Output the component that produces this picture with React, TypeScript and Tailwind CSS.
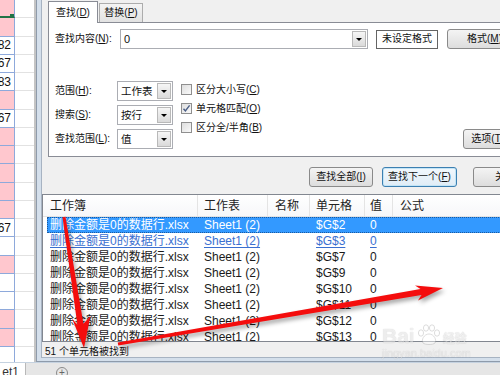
import type { ReactNode } from 'react';

const FONT = "font-['Liberation_Sans','Noto_Sans_CJK_SC',sans-serif]";

type SheetCell = { pink: boolean; value?: string };

const SHEET_ROWS: SheetCell[] = [
  { pink: true },
  { pink: true },
  { pink: false, value: '82' },
  { pink: false, value: '67' },
  { pink: false, value: '83' },
  { pink: true },
  { pink: false, value: '67' },
  { pink: true },
  { pink: true },
  { pink: true },
  { pink: true },
  { pink: true },
  { pink: false, value: '67' },
  { pink: false },
  { pink: true },
  { pink: false },
  { pink: false },
  { pink: true },
  { pink: true },
  { pink: false },
];

const RESULTS = ['$G$2', '$G$3', '$G$7', '$G$9', '$G$10', '$G$11', '$G$12', '$G$13'];

function Key({ k }: { k: string }) {
  return (
    <>
      (<u className="underline-offset-[1px]">{k}</u>)
    </>
  );
}

function Sheet() {
  return (
    <div className="flex h-[362px] w-[34px] shrink-0 flex-col overflow-hidden bg-white">
      {SHEET_ROWS.map((row, i) => (
        <div key={i} className="flex h-[18.25px] shrink-0">
          <div
            className={`relative flex w-[15px] shrink-0 items-center justify-end overflow-hidden whitespace-nowrap border-r border-b pr-[3px] text-[12px] text-[#111] ${
              row.pink ? 'bg-[#ffc7ce]' : 'bg-white'
            } ${i === 0 ? 'border-b-[2px] border-b-[#217346] border-r-[#8ea9db]' : 'border-[#8ea9db]'}`}
          >
            {row.value}
            {i === 0 && <span className="absolute right-[-1px] bottom-[-3px] h-[5px] w-[5px] bg-[#217346]" />}
          </div>
          <div className="flex-1 border-b border-[#e2e2e2]" />
        </div>
      ))}
    </div>
  );
}

function DropArrow() {
  return (
    <span className="m-px flex w-[14px] items-center justify-center border border-[#b9b9b9] bg-linear-to-b from-[#f6f6f6] to-[#dadada]">
      <span className="h-0 w-0 border-x-[3px] border-t-[3px] border-x-transparent border-t-black" />
    </span>
  );
}

function Select({ value }: { value: string }) {
  return (
    <div className="flex h-[20px] w-[56px] shrink-0 border border-[#abadb3] bg-white">
      <span className="flex flex-1 items-center pl-[3px] text-[10.5px]">{value}</span>
      <DropArrow />
    </div>
  );
}

function Check({ checked, children }: { checked?: boolean; children: ReactNode }) {
  return (
    <div className="flex h-[19px] items-center whitespace-nowrap">
      <span className="flex h-[11px] w-[11px] items-center justify-center border border-[#8f8f8f] bg-linear-to-br from-[#dedede] to-[#fafafa]">
        {checked && (
          <svg width="9" height="9" viewBox="0 0 9 9">
            <path d="M1.5 4.8 L3.4 7 L7.6 1.4" fill="none" stroke="#4a5e86" strokeWidth="1.4" />
          </svg>
        )}
      </span>
      <span className="ml-[4px]">{children}</span>
    </div>
  );
}

function Btn({ className, primary, children }: { className: string; primary?: boolean; children: ReactNode }) {
  return (
    <div
      className={`flex h-[20px] shrink-0 items-center justify-center whitespace-nowrap rounded-[3px] border ${
        primary
          ? 'border-[#3c7fb1] bg-linear-to-b from-[#f2f8fd] to-[#dfecf6] shadow-[inset_0_0_0_1px_#c2e4f6]'
          : 'border-[#8a8a8a] bg-linear-to-b from-[#f4f4f4] to-[#dddddd]'
      } ${className}`}
    >
      {children}
    </div>
  );
}

function FindDialog() {
  return (
    <div className="flex h-[362px] min-w-0 flex-1 border-l-2 border-[#c4c4c4]">
      <div className="flex min-w-0 flex-1 border-b border-l border-[#8e9bab] bg-[#d4dfeb] pb-[3px] pl-[4px]">
        <div className="flex min-w-0 flex-1 flex-col overflow-hidden border-b border-l border-[#a7b3c2] bg-[#f0f0f0] text-[10px] leading-none text-[#111]">
          {/* tabs */}
          <div className="flex h-[22px] shrink-0 items-end pl-[6px]">
            <div className="relative z-10 -mb-px flex h-[22px] w-[50px] items-center justify-center border border-b-0 border-[#898c95] bg-white">
              查找<Key k="D" />
            </div>
            <div className="ml-px flex h-[19px] w-[44px] items-center justify-center border border-b-0 border-[#acacac] bg-linear-to-b from-[#f4f4f4] to-[#e2e2e2]">
              替换<Key k="P" />
            </div>
          </div>

          <div className="ml-[6px] h-[135px] w-[486px] shrink-0 border border-[#898c95] bg-white px-[6px] pt-[6px]">
            <div className="flex h-[20px] items-center">
              <span className="w-[65px] shrink-0 whitespace-nowrap">
                查找内容<Key k="N" />:
              </span>
              <div className="flex h-[20px] w-[248px] shrink-0 border border-[#abadb3] bg-white">
                <span className="flex flex-1 items-center pl-[3px] text-[11px]">0</span>
                <DropArrow />
              </div>
              <div className="ml-[8px] flex h-[19px] w-[62px] shrink-0 items-center justify-center border border-[#646464] bg-white">
                未设定格式
              </div>
              <Btn className="ml-[9px] w-[75px]">
                格式<Key k="M" />
              </Btn>
            </div>

            <div className="mt-[32px] flex">
              <div className="flex flex-col gap-[4px]">
                {[
                  ['范围', 'H', '工作表'],
                  ['搜索', 'S', '按行'],
                  ['查找范围', 'L', '值'],
                ].map(([label, k, value]) => (
                  <div key={k} className="flex h-[20px] items-center">
                    <span className="w-[62px] shrink-0 whitespace-nowrap">
                      {label}
                      <Key k={k} />:
                    </span>
                    <Select value={value} />
                  </div>
                ))}
              </div>
              <div className="-mt-px ml-[8px] flex w-[90px] flex-col">
                <Check>
                  区分大小写<Key k="C" />
                </Check>
                <Check checked>
                  单元格匹配<Key k="O" />
                </Check>
                <Check>
                  区分全/半角<Key k="B" />
                </Check>
              </div>
              <Btn className="ml-auto w-[64px] self-end">
                选项<Key k="T" /> &lt;&lt;
              </Btn>
            </div>
          </div>

          <div className="mt-[10px] flex h-[20px] shrink-0 pl-[267px]">
            <Btn className="w-[64px]">
              查找全部<Key k="I" />
            </Btn>
            <Btn primary className="ml-[9px] w-[75px]">
              查找下一个<Key k="F" />
            </Btn>
            <Btn className="ml-[16px] w-[64px]">关闭</Btn>
          </div>

          <div className="mt-[7px] flex h-[148px] w-[520px] shrink-0 flex-col overflow-hidden border border-[#828790] bg-white text-[12px] leading-none">
            <div className="flex h-[22px] shrink-0 border-b border-[#e3e3e3] bg-linear-to-b from-white to-[#f6f7f9] text-[#222]">
              <div className="flex w-[155px] items-center border-r border-[#e4e4e4] pl-[7px]">工作簿</div>
              <div className="flex w-[70px] items-center border-r border-[#e4e4e4] pl-[6px]">工作表</div>
              <div className="flex w-[42px] items-center border-r border-[#e4e4e4] pl-[7px]">名称</div>
              <div className="flex w-[55px] items-center border-r border-[#e4e4e4] pl-[6px]">单元格</div>
              <div className="flex w-[28px] items-center border-r border-[#e4e4e4] pl-[5px]">值</div>
              <div className="flex flex-1 items-center pl-[7px]">公式</div>
            </div>
            {RESULTS.map((cell, i) => {
              const selected = i === 0;
              const hot = i === 1;
              return (
                <div
                  key={cell}
                  className={`ml-[4px] flex h-[16px] shrink-0 whitespace-nowrap ${
                    selected ? 'bg-[#3399ff] text-white outline-1 outline-dotted outline-[#1a5aa0] -outline-offset-1' : ''
                  } ${hot ? 'text-[#3a6fd0] underline underline-offset-2' : ''} ${!selected && !hot ? 'text-[#1a1a1a]' : ''}`}
                >
                  <div className="flex w-[151px] items-center pl-[3px]">删除金额是0的数据行.xlsx</div>
                  <div className="flex w-[70px] items-center pl-[6px]">Sheet1 (2)</div>
                  <div className="w-[42px]" />
                  <div className="flex w-[55px] items-center pl-[6px]">{cell}</div>
                  <div className="flex w-[28px] items-center pl-[5px]">0</div>
                  <div className="flex-1" />
                </div>
              );
            })}
          </div>

          <div className="flex h-[15px] shrink-0 items-center pl-[3px] pt-[4px] whitespace-nowrap">51 个单元格被找到</div>
        </div>
      </div>
    </div>
  );
}

function SheetTabs() {
  return (
    <div className="flex h-[13px] items-start overflow-hidden border-t border-[#c5d2e0] bg-[#e6e6e6] text-[#333]">
      <div className="flex h-[13px] w-[26px] items-start justify-end border-r border-[#b8b8b8] bg-white pr-[6px] pt-[3px] text-[12px] leading-none">
        et1
      </div>
      <span className="mt-[4px] ml-[30px] flex h-[12px] w-[12px] items-start justify-center rounded-full border border-[#8a8a8a] text-[10px] leading-none text-[#666]">
        +
      </span>
    </div>
  );
}

function Watermark() {
  return (
    <div className="pointer-events-none absolute top-[324px] left-[382px] flex flex-col text-white/70 opacity-70 [text-shadow:0_0_1px_rgba(0,0,0,0.35)]">
      <div className="flex items-end">
        <span className="text-[21px] leading-none font-bold">Bai</span>
        <svg width="26" height="22" viewBox="0 0 26 22" className="mx-px opacity-60">
          <g fill="#fff" stroke="#9a9a9a" strokeWidth="0.8">
            <ellipse cx="5" cy="9" rx="2.6" ry="3.2" />
            <ellipse cx="10" cy="4" rx="2.6" ry="3.2" />
            <ellipse cx="16" cy="4" rx="2.6" ry="3.2" />
            <ellipse cx="21" cy="9" rx="2.6" ry="3.2" />
            <path d="M13 10 C8 10 5 16 7 19 C9 21 17 21 19 19 C21 16 18 10 13 10 Z" />
          </g>
        </svg>
        <span className="mb-px text-[12px] leading-none font-bold">经验</span>
      </div>
      <span className="mt-[2px] text-[11px] leading-none">jingyan.baidu.com</span>
    </div>
  );
}

function Arrows() {
  return (
    <svg
      className="pointer-events-none absolute inset-0 drop-shadow-[2px_3px_2px_rgba(0,0,0,0.35)]"
      width="500"
      height="375"
      viewBox="0 0 500 375"
    >
      <polygon
        fill="#f40d0d"
        points="62.5,217.2 65.5,216.8 83.4,323.8 90.5,316 84,348 72,318.5 77.4,324.8"
      />
      <polygon
        fill="#f40d0d"
        points="117.7,342.5 420.5,289 415,285.5 443,288 418,300.5 421.5,295 118.3,345.5"
      />
    </svg>
  );
}

export default function App() {
  return (
    <div className={`relative h-[375px] w-[500px] overflow-hidden bg-white ${FONT}`}>
      <div className="flex h-[362px]">
        <Sheet />
        <FindDialog />
      </div>
      <SheetTabs />
      <Watermark />
      <Arrows />
    </div>
  );
}
